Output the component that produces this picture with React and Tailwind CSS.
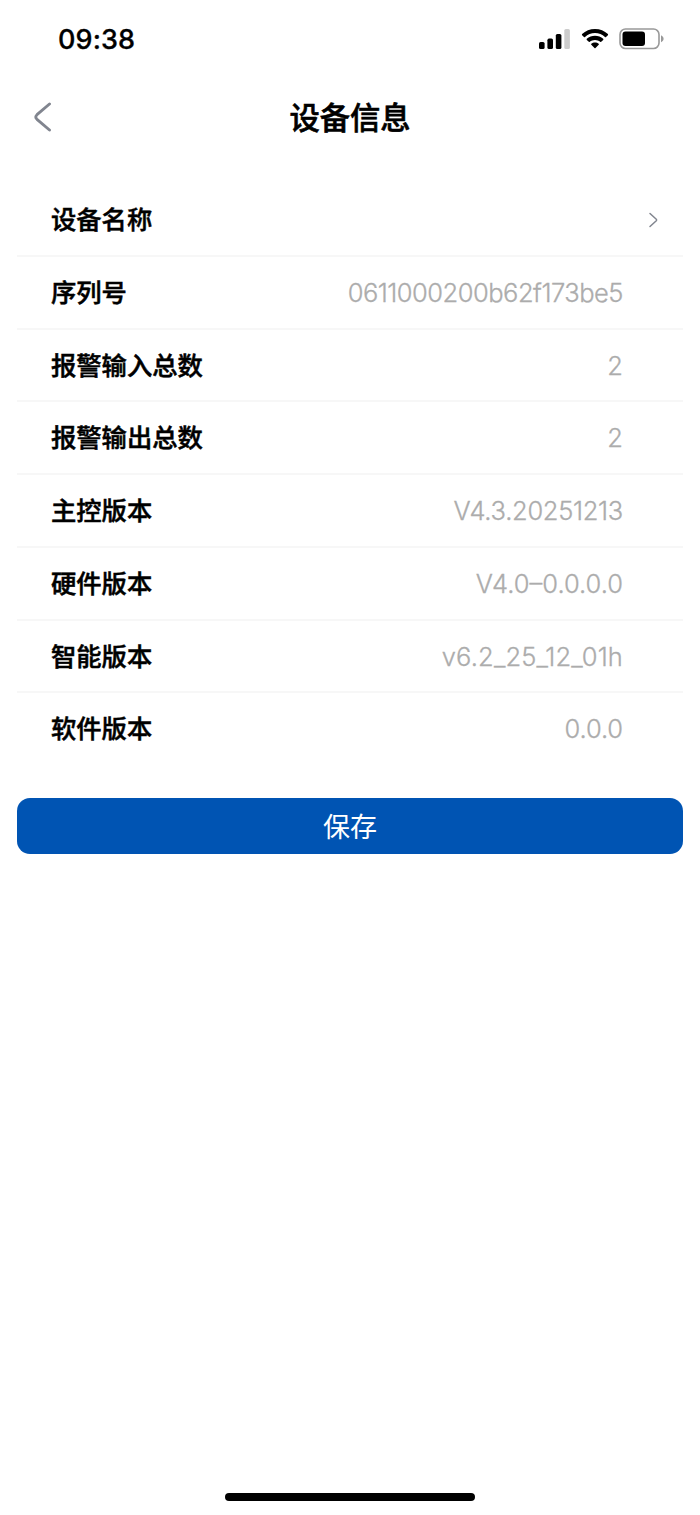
import React from "react";

const ROWS = [
  { label: "设备名称", arrow: true },
  { label: "序列号", value: "0611000200b62f173be5", spacing: "tracking-[-0.5px]" },
  { label: "报警输入总数", value: "2" },
  { label: "报警输出总数", value: "2" },
  { label: "主控版本", value: "V4.3.20251213", spacing: "tracking-[-0.3px]" },
  { label: "硬件版本", value: "V4.0–0.0.0.0", spacing: "tracking-[0px]" },
  { label: "智能版本", value: "v6.2_25_12_01h", spacing: "tracking-[0.15px]" },
  { label: "软件版本", value: "0.0.0", spacing: "tracking-[-0.1px]" },
];

function StatusBar() {
  return (
    <div className="flex h-[77px] items-center justify-between pl-[58px] pr-[35px]">
      <span className="font-['Inter'] pt-px text-[27px] font-medium leading-none tracking-[0.1px] [-webkit-text-stroke:0.3px]">
        09:38
      </span>
      <div className="flex items-center">
        <svg width="32" height="20" viewBox="0 0 32 20">
          <rect x="0" y="13" width="5.6" height="7" rx="1.6" />
          <rect x="8.4" y="9.6" width="5.6" height="10.4" rx="1.6" />
          <rect x="16.8" y="5" width="5.6" height="15" rx="1.6" />
          <rect x="25.3" y="0" width="5.6" height="20" rx="1.6" fill="#ccc" />
        </svg>
        <svg className="ml-[10px]" width="28" height="20" viewBox="0 0 28 20">
          <path d="M14 0C19 0 23.500 1.900 26.900 5.100C27.200 5.400 27.200 5.900 26.900 6.200L25 8.100C24.700 8.400 24.300 8.400 24 8.100C21.300 5.600 17.800 4.100 14 4.100S6.700 5.600 4 8.100C3.700 8.400 3.300 8.400 3 8.100L1.100 6.200C.8 5.900.8 5.400 1.100 5.100C4.500 1.900 9 0 14 0Z" />
          <path d="M14 6.700C17.100 6.700 20 7.900 22.200 9.800C22.500 10.100 22.500 10.600 22.200 10.900L20.200 12.800C19.900 13.100 19.500 13.100 19.200 12.800C17.800 11.600 16 10.900 14 10.900S10.200 11.600 8.800 12.800C8.500 13.100 8.100 13.100 7.800 12.800L5.800 10.900C5.500 10.600 5.500 10.100 5.800 9.800C8 7.900 10.900 6.700 14 6.700Z" />
          <path d="M14 13.500C15.400 13.500 16.700 14 17.700 14.800C18 15.100 18 15.500 17.700 15.800L14.500 19C14.200 19.300 13.800 19.300 13.500 19L10.300 15.800C10 15.500 10 15.100 10.300 14.800C11.300 14 12.600 13.500 14 13.500Z" />
        </svg>
        <svg className="ml-[10px]" width="46" height="22" viewBox="0 0 46 22">
          <rect
            x="1"
            y="1"
            width="39"
            height="19.500"
            rx="5.500"
            fill="none"
            stroke="#999"
            strokeWidth="1.600"
          />
          <rect x="3.500" y="3.500" width="22.500" height="14.500" rx="3" />
          <path d="M42 7.300C43.600 8 44.600 9.300 44.600 10.800S43.600 13.600 42 14.300Z" fill="#999" />
        </svg>
      </div>
    </div>
  );
}

function Header() {
  return (
    <header className="grid h-20 grid-cols-3 items-center px-[33px]">
      <button className="justify-self-start">
        <svg width="19" height="30" viewBox="0 0 19 30" fill="none">
          <path
            d="M16.500 2L4 12.700Q1.500 15 4 17.300L16.500 28"
            stroke="#81858f"
            strokeWidth="2.900"
            strokeLinecap="round"
          />
        </svg>
      </button>
      <h1 className="whitespace-nowrap pb-px text-center text-[30.300px] font-medium leading-none [-webkit-text-stroke:0.6px]">
        设备信息
      </h1>
    </header>
  );
}

function InfoRow({ label, value, arrow, spacing = "" }) {
  return (
    <li className="flex h-[72.75px] items-center justify-between border-b-2 border-[#f7f7f7] pl-[34px] pr-[60px] last:border-transparent">
      <span className="pb-px text-[25.300px] font-medium leading-none [-webkit-text-stroke:0.5px]">
        {label}
      </span>
      {value && (
        <span
          className={`font-['Inter'] pt-px text-[25.500px] font-light leading-none text-[#acacac] [-webkit-text-stroke:0.3px] ${spacing}`}
        >
          {value}
        </span>
      )}
      {arrow && (
        <svg className="-mr-9 mt-[2px]" width="11" height="16" viewBox="0 0 11 16" fill="none">
          <path
            d="M2 1.500L8.300 7.300Q9 8 8.300 8.700L2 14.500"
            stroke="#81858f"
            strokeWidth="1.500"
            strokeLinecap="round"
          />
        </svg>
      )}
    </li>
  );
}

export default function App() {
  return (
    <div className="flex h-[1515px] w-[700px] flex-col bg-white font-['Noto_Sans_CJK_SC',sans-serif] text-black">
      <StatusBar />
      <Header />

      <main className="mt-[27px] flex-1 px-[17px]">
        <ul>
          {ROWS.map((row) => (
            <InfoRow key={row.label} {...row} />
          ))}
        </ul>
        <button className="mt-8 flex h-14 w-full items-center justify-center rounded-[13px] bg-[#0054b3] pb-[2px] text-[27px] leading-none text-white">
          保存
        </button>
      </main>

      <div className="mx-auto mb-[14px] h-[8px] w-[250px] rounded-full bg-black" />
    </div>
  );
}
